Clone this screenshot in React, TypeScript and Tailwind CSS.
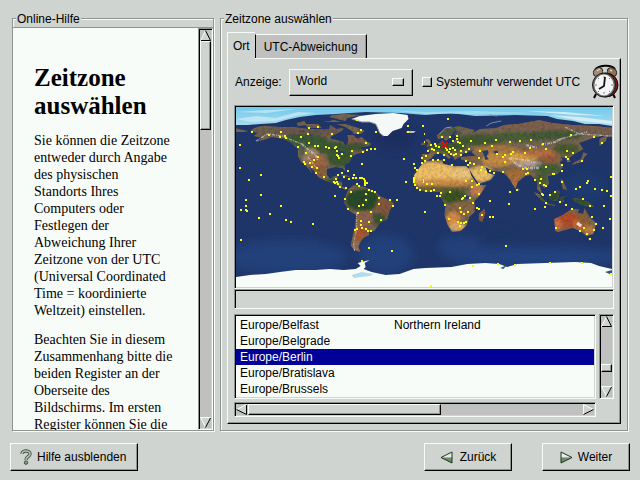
import React, { useState } from 'react';

const RAISED =
  'border border-t-[#f8fcf8] border-l-[#f8fcf8] border-r-black border-b-black bg-[#d0d4d0] shadow-[inset_-1px_-1px_0_#909490]';
const SUNKEN =
  'border border-t-[#909490] border-l-[#909490] border-r-[#f8fcf8] border-b-[#f8fcf8] p-px shadow-[inset_1px_1px_0_#000,inset_-1px_-1px_0_#d0d4d0]';
const GROOVE = 'border border-[#909490] shadow-[1px_1px_0_#f8fcf8,inset_1px_1px_0_#f8fcf8]';

const ZONES = [
  { name: 'Europe/Belfast', comment: 'Northern Ireland' },
  { name: 'Europe/Belgrade', comment: '' },
  { name: 'Europe/Berlin', comment: '' },
  { name: 'Europe/Bratislava', comment: '' },
  { name: 'Europe/Brussels', comment: '' },
];

// Land outlines: longitude, negated latitude
const LAND =
  'M-166-68L-162-70-156-71-141-70-128-70-115-68-108-68-95-68-94-72-88-68-82-69-82-67-87-64-94-60-93-58-88-57-82-55-80-51-78-53-77-57-78-62-73-62-69-58-65-60-62-57-56-53-58-51-66-50-65-48-61-46-66-44-70-43-74-40-76-35-81-32-80-26-83-29-89-30-97-28-97-22-94-18-90-21-87-21-88-16-83-15-83-10-78-9-80-7-85-10-92-14-100-17-105-20-109-26-114-31-110-23-117-32-121-35-124-41-124-48-130-54-137-58-148-60-156-57-163-55-157-59-165-61-161-64-168-66Z' +
  'M-77-8L-72-12-62-10-52-5-48-1-40 3-35 6-39 14-41 22-48 26-53 34-58 35-58 38-62 40-65 43-68 50-66 55-72 53-75 48-73 38-71 30-70 18-76 14-81 6-80 0Z' +
  'M-6-36L10-37 11-33 20-31 32-31 35-28 37-21 43-12 51-12 45-2 40 4 40 15 35 20 33 28 27 34 19 35 15 28 12 18 13 8 9 1 8-5-5-5-12-8-17-14-16-22-10-31Z' +
  'M-9-37L-9-43-2-43-1-46-4-48 2-51 8-54 10-57 12-54 20-54 24-59 30-60 24-60 21-63 25-65 22-66 17-61 18-60 13-56 11-59 6-58 5-62 14-68 25-71 40-67 38-64 45-68 60-69 68-72 80-73 100-77 112-74 130-72 150-71 170-69 180-68 180-65 175-62 163-60 162-56 156-51 156-58 163-62 150-59 137-54 141-48 133-43 128-39 129-35 126-35 125-39 120-40 122-37 119-35 122-30 117-23 108-21 109-13 105-9 100-13 103-2 98-8 98-16 92-22 87-21 80-15 78-8 73-17 70-21 66-25 57-26 50-30 52-24 59-22 55-17 44-13 39-21 35-28 35-36 28-37 27-40 41-41 37-45 39-47 33-45 28-43 28-41 23-38 22-37 19-41 13-45 18-40 16-38 12-42 8-44 3-43 0-39-5-36Z' +
  'M-5-50L1-51 0-53-2-57-4-58-6-57-3-54Z M-10-52L-6-52-6-55-9-54Z M-24-64L-14-65-16-66-23-66Z' +
  'M49 12L50 16 47 25 44 23 44 17Z M130-32L136-34 140-35 142-40 145-43 141-45 139-38 133-35Z' +
  'M95-5L100-3 106 5 103 4 98-1Z M106 6L115 8 114 9 106 7Z M109-1L117-7 119-5 117 4 111 3Z M119 1L125-1 122 1 123 5 120 5Z' +
  'M120-18L122-17 124-12 126-7 122-8 121-13Z M131 1L138 2 147 6 151 10 143 9 138 7 133 4Z M80-9L82-7 80-6Z' +
  'M114 22L122 18 130 12 137 12 136 16 141 17 142 11 146 19 153 26 150 37 144 39 138 34 131 31 124 33 118 35 115 34Z M145 41L148 41 147 44Z' +
  'M-85-22L-77-20-75-20-80-22Z M-74-20L-68-19-72-18Z M-182-69L-175-67-170-66-174-65-182-65Z' +
  'M-88-73L-80-73-68-69-62-66-66-63-72-63-74-66-80-70Z M-117-73L-105-73-102-69-115-69Z M-125-74L-118-76-116-72-124-71Z M-95-80L-80-76-78-79-65-82-80-83-92-82Z M-100-75L-84-75-90-77Z';

const CITIES: [number, number][] = [
  // North America
  [120, 12], [81, 19], [72, 20], [15, 24], [32, 27], [44, 24], [43, 29], [48, 28], [49, 30], [64, 29], [71, 26],
  [95, 26], [124, 22], [121, 25], [139, 24], [171, 18], [171, 24], [3, 37], [61, 39], [72, 35], [78, 38], [81, 38],
  [89, 39], [92, 40], [98, 40], [99, 39], [129, 35], [134, 41], [138, 41], [130, 42], [126, 44], [115, 43], [100, 43],
  [105, 46], [100, 47], [101, 48], [102, 50], [114, 48], [69, 45], [77, 52], [81, 49], [67, 54], [68, 56], [73, 55],
  [75, 59], [80, 60], [79, 65], [87, 69], [125, 56],
  // Caribbean and Central America
  [111, 63], [105, 65], [101, 67], [107, 69], [99, 71], [112, 71], [117, 67], [116, 70], [119, 70], [123, 70],
  [125, 70], [127, 71], [128, 73], [130, 75], [128, 77], [128, 75], [97, 74], [98, 75], [100, 74], [101, 76],
  [103, 79], [109, 80], [114, 84], [120, 76], [122, 78], [132, 82], [135, 83], [138, 84],
  // South America and the Atlantic
  [129, 86], [98, 88], [108, 91], [142, 90], [153, 92], [160, 92], [167, 51], [177, 56], [169, 74], [111, 101],
  [122, 98], [126, 97], [129, 92], [142, 96], [156, 98], [134, 104], [121, 105], [124, 113], [124, 117], [125, 120],
  [120, 121], [118, 122], [129, 121], [131, 123], [134, 123], [132, 114], [144, 112], [132, 140], [155, 143],
  [125, 153], [189, 104],
  // Pacific
  [3, 60], [12, 72], [24, 67], [24, 87], [9, 92], [9, 98], [4, 102], [9, 102], [10, 103], [22, 110], [33, 106],
  [44, 98], [49, 112], [54, 114], [76, 116], [4, 132],
  // Africa
  [178, 60], [180, 62], [177, 70], [177, 74], [177, 72], [178, 77], [180, 80], [183, 82], [190, 83], [185, 55],
  [189, 53], [187, 72], [187, 74], [191, 76], [196, 76], [195, 83], [198, 82], [205, 85], [204, 88], [201, 88],
  [214, 84], [226, 91], [229, 88], [234, 90], [237, 95], [209, 97], [227, 90], [243, 86], [241, 100], [243, 101],
  [246, 107], [254, 93], [254, 109], [257, 109], [224, 100], [225, 104], [228, 106], [232, 104], [213, 111],
  [222, 114], [225, 115], [228, 115], [230, 114], [224, 118], [230, 73], [236, 73], [236, 79], [241, 77], [243, 76],
  // Europe
  [186, 18], [212, 11], [188, 26], [188, 34], [195, 37], [199, 36], [200, 38], [206, 29], [214, 29], [221, 28],
  [221, 31], [217, 33], [222, 34], [224, 35], [227, 38], [235, 33], [203, 39], [196, 41], [198, 42], [192, 43],
  [202, 45], [210, 40], [211, 42], [214, 41], [213, 44], [215, 46], [217, 40], [219, 42], [220, 46], [218, 47],
  [225, 43], [225, 47], [230, 44], [233, 41], [190, 48], [185, 50], [197, 52], [202, 52], [208, 52], [208, 47],
  [216, 57],
  // Asia
  [230, 53], [232, 57], [234, 55], [238, 56], [243, 50], [244, 43], [249, 35], [256, 38], [260, 32], [274, 34],
  [284, 33], [295, 32], [307, 36], [294, 40], [289, 45], [277, 44], [269, 47], [267, 49], [269, 54], [275, 46],
  [261, 46], [335, 27], [358, 29], [366, 35], [310, 41], [331, 43], [337, 45], [330, 49], [332, 51], [346, 53],
  [326, 57], [326, 63], [317, 66], [318, 66], [310, 59], [305, 71], [299, 72], [287, 61], [291, 61], [292, 65],
  [290, 66], [267, 64], [258, 65], [254, 63], [250, 64], [246, 59], [245, 62], [281, 82], [274, 84], [304, 75],
  [308, 77], [310, 78], [306, 86], [314, 87], [319, 84], [326, 74],
  // Indian Ocean, Oceania
  [273, 96], [270, 138], [340, 81], [344, 79], [352, 73], [351, 75], [359, 81], [366, 82], [371, 83], [375, 69],
  [375, 88], [347, 91], [299, 101], [309, 99], [310, 95], [307, 87], [324, 94], [330, 97], [336, 101], [354, 98],
  [368, 98], [374, 111], [367, 120], [360, 116], [356, 109], [348, 120], [344, 123], [351, 126], [358, 122],
  [354, 131], [320, 120],
  // Antarctica
  [237, 158], [262, 156], [279, 157], [314, 155], [346, 155], [195, 178], [375, 166],
];

// cx, cy, rx, ry, colour
const TERRAIN: [number, number, number, number, string][] = [
  [-150, -66, 16, 5, '#6d604c'],
  [-115, -66, 30, 5, '#6a5650'],
  [-118, -57, 22, 6, '#3c5a38'],
  [-100, -50, 26, 6, '#3a5a34'],
  [-85, -40, 12, 10, '#3a5834'],
  [-70, -56, 10, 7, '#7c5a48'],
  [-70, -50, 12, 4, '#3d5434'],
  [-112, -41, 8, 8, '#a08468'],
  [-106, -35, 9, 7, '#a06a42'],
  [-103, -26, 6, 6, '#8a6040'],
  [-120, -48, 3, 8, '#546048'],
  [-90, -16, 9, 3, '#3c5a2e'],
  [-64, 3, 16, 11, '#2c4c2c'],
  [-44, 10, 8, 10, '#80583c'],
  [-50, 22, 8, 6, '#3e5430'],
  [-62, 22, 8, 8, '#8c6450'],
  [-66, 37, 6, 8, '#a85a30'],
  [-70, 49, 4, 5, '#96705a'],
  [2, -24, 24, 11, '#f0c068'],
  [28, -23, 10, 8, '#ecc47c'],
  [10, -14, 30, 4, '#cc9048'],
  [10, -8, 26, 3, '#646034'],
  [21, 0, 12, 7, '#3c5228'],
  [42, -7, 6, 7, '#c08050'],
  [28, 12, 12, 8, '#886844'],
  [20, 22, 7, 7, '#d88c48'],
  [24, 30, 8, 4, '#e0b070'],
  [46, -23, 11, 8, '#ecc068'],
  [0, -41, 9, 4, '#806a44'],
  [15, -50, 18, 5, '#3a5634'],
  [18, -64, 10, 5, '#4c5a44'],
  [45, -57, 22, 6, '#425834'],
  [80, -60, 28, 5, '#4a5e38'],
  [115, -62, 26, 5, '#445a38'],
  [110, -71, 50, 4, '#80604e'],
  [155, -66, 20, 5, '#786050'],
  [60, -47, 22, 5, '#a8783f'],
  [62, -37, 16, 7, '#c48c44'],
  [35, -39, 8, 2, '#94683c'],
  [85, -40, 14, 5, '#d8a448'],
  [100, -44, 18, 4, '#b8703f'],
  [110, -38, 9, 4, '#985c3c'],
  [90, -33, 13, 3, '#b4a098'],
  [78, -23, 9, 6, '#a87038'],
  [78, -14, 4, 6, '#b07040'],
  [108, -28, 13, 6, '#465e38'],
  [125, -48, 12, 6, '#4c5a34'],
  [102, -17, 7, 6, '#4c5c30'],
  [113, 0, 12, 8, '#345030'],
  [140, 5, 14, 5, '#36542c'],
  [48, 19, 4, 8, '#8c5440'],
  [126, 23, 14, 8, '#b4502c'],
  [117, 28, 4, 6, '#c87048'],
  [138, 27, 6, 6, '#c86838'],
  [142, 21, 6, 7, '#8c6038'],
  [147, 33, 6, 5, '#b87c44'],
];

function WorldMap() {
  return (
    <svg
      viewBox="0 0 377 180"
      preserveAspectRatio="none"
      role="img"
      aria-label="World"
      className="block h-full w-full"
    >
      <defs>
        <clipPath id="land">
          <path d={LAND} />
        </clipPath>
        <filter id="soft" x="-30%" y="-30%" width="160%" height="160%">
          <feGaussianBlur stdDeviation="1.6" />
        </filter>
        <filter id="haze" x="-30%" y="-30%" width="160%" height="160%">
          <feGaussianBlur stdDeviation="5" />
        </filter>
        <filter id="grain" x="0" y="0" width="100%" height="100%">
          <feTurbulence type="fractalNoise" baseFrequency="0.35" numOctaves="3" seed="4" />
          <feColorMatrix values="0 0 0 0 0  0 0 0 0 0  0 0 0 0 0  1.8 0 0 0 -0.7" />
        </filter>
        <linearGradient id="ice" x1="0" y1="0" x2="0" y2="1">
          <stop offset="0" stopColor="#70c8ec" />
          <stop offset="1" stopColor="#a8dcf0" />
        </linearGradient>
      </defs>

      <rect width="377" height="180" fill="#1f3568" />
      <g filter="url(#haze)">
        <ellipse cx="50" cy="150" rx="62" ry="17" fill="#203f7a" />
        <ellipse cx="150" cy="148" rx="28" ry="20" fill="#203f7a" />
        <ellipse cx="300" cy="150" rx="90" ry="10" fill="#20427f" />
        <ellipse cx="225" cy="140" rx="22" ry="12" fill="#22407a" />
        <ellipse cx="265" cy="128" rx="14" ry="7" fill="#1d3462" />
        <ellipse cx="160" cy="30" rx="22" ry="14" fill="#1c2f60" />
        <ellipse cx="350" cy="80" rx="20" ry="12" fill="#1f3a70" />
      </g>

      {/* arctic ice */}
      <path
        d="M0 0H377V19L364 17 350 17 338 14 322 12 312 9 280 8 240 9 215 6 190 8 165 6 130 5 100 7 80 8 64 10 50 13 40 16 24 17 12 18 0 18Z"
        fill="url(#ice)"
      />
      <path d="M0 12L20 9 40 11 62 5 80 6 60 9 40 14 15 15Z M0 5L30 3 60 2 30 6Z" fill="#d4eef4" opacity=".65" />
      <path d="M315 8L345 10 377 14 377 17 345 14Z M290 4L330 5 370 9 340 8Z" fill="#e8f4f4" opacity=".75" />
      <path d="M150 3L190 5 240 4 300 6 240 7 190 7Z" fill="#b8e4ee" opacity=".6" />

      <g transform="translate(196 90) scale(1.08 1)">
        <path d={LAND} fill="#786652" />
        <g clipPath="url(#land)">
          <g filter="url(#soft)">
            {TERRAIN.map(([cx, cy, rx, ry, fill], i) => (
              <ellipse key={i} cx={cx} cy={cy} rx={rx} ry={ry} fill={fill} />
            ))}
          </g>
          <rect x="-182" y="-90" width="349" height="180" filter="url(#grain)" opacity=".2" />
        </g>
        {/* inland seas and lakes */}
        <g fill="#223c68">
          <path d="M47-46L52-47 53-44 51-41 53-38 50-37 49-41Z" />
          <ellipse cx="60" cy="-45" rx="2" ry="1.5" />
          <path d="M-92-47L-87-49-84-46-80-45-82-43-86-45Z M-87-42L-86-46-85-42Z M104-52L109-55 107-52Z M32-1h3v3h-3Z" />
          <path d="M-124-66L-118-66-118-65Z M-114-62L-109-63-112-61Z M-98-53L-96-50-98-50Z" />
        </g>
      </g>

      {/* Greenland and Iceland */}
      <path d="M116 12L124 9 140 7 158 6 172 8 173 12 168 17 166 21 157 24 152 29 148 29 144 26 142 21 140 17 134 15 126 15Z" fill="#f4f8f6" />
      <path d="M116 12L126 15 134 15 140 17 142 21 144 26 148 29" fill="none" stroke="#8c9098" strokeWidth="1" />
      <path d="M173 24L180 24 178 26 174 26Z" fill="#b8c4cc" />

      {/* snow on the mountain ranges */}
      <g fill="none" stroke="#dcd8dc" strokeDasharray="3 1 1 1" opacity=".6">
        <path d="M20 34L32 27 46 29 58 34 66 37" strokeWidth="1.4" />
        <path d="M66 37L73 43 80 48 82 54" strokeWidth="2" />
        <path d="M72 50L77 56 80 60" strokeWidth="1.2" />
        <path d="M274 51L282 58 291 61 304 61" strokeWidth="2.4" />
        <path d="M274 51L290 53 302 56" strokeWidth="1.4" />
        <path d="M291 38L302 41 M306 38L320 35 328 31" strokeWidth="2" />
        <path d="M322 33L340 28 352 25 M330 20L344 27 377 29" strokeWidth="1.3" />
        <path d="M121 106L121 122 118 136 119 144" strokeWidth="1" />
      </g>
      <path d="M204 27L210 21 216 20" fill="none" stroke="#a09c98" strokeWidth="1" />
      <path d="M251 19L256 16 266 14 M254 8L262 9" fill="none" stroke="#7c88a4" strokeWidth="1" />
      <path d="M342 116L346 119" fill="none" stroke="#ecdcc8" strokeWidth="3" />

      {/* Antarctica */}
      <path
        d="M0 170L14 168 30 167 44 165 60 163 80 163 94 162 108 163 120 162 125 159 122 156 134 153 129 156 130 160 128 162 136 165 150 168 164 167 178 162 190 161 216 160 232 157 250 156 264 157 272 160 282 157 310 156 340 155 356 156 364 159 377 162V180H0Z"
        fill="#f8fcf8"
      />
      <path d="M116 168L126 165 138 167 134 169 118 171Z" fill="#b0dcec" />
      <path d="M265 161L272 158 268 162Z M370 165L377 163V168Z" fill="#2c5484" />

      <g fill="#ffff00" shapeRendering="crispEdges">
        {CITIES.map(([x, y], i) => (
          <rect key={i} x={x} y={y} width="2" height="2" />
        ))}
      </g>
      <path d="M206 35L212 41M212 35L206 41" stroke="#f80000" strokeWidth="1.6" />
    </svg>
  );
}

function ClockIcon() {
  return (
    <svg width="28" height="36" viewBox="0 0 28 36" className="block" aria-hidden="true">
      <path d="M4 6C7 1 20 0 24 5" fill="none" stroke="#000" strokeWidth="2" />
      <path d="M5 30L3 34M22 30L24 34" stroke="#000" strokeWidth="2" />
      <ellipse cx="7" cy="8" rx="5" ry="4" transform="rotate(-35 7 8)" fill="#a08c74" stroke="#302418" />
      <ellipse cx="21" cy="8" rx="5" ry="4" transform="rotate(35 21 8)" fill="#8c745c" stroke="#302418" />
      <path d="M6 7L9 5M19 6L21 7" stroke="#d8ccb8" strokeWidth="1.5" />
      <ellipse cx="15" cy="21" rx="12" ry="12" fill="#6c1c14" stroke="#180808" />
      <ellipse cx="13" cy="21" rx="11.5" ry="12" fill="#706c6c" stroke="#181818" />
      <ellipse cx="13" cy="21" rx="9.6" ry="10.4" fill="#f4f4f4" />
      <path
        d="M13 12v2M13 28v2M4 21h2M20 21h2M7 14l1 1M19 14l-1 1M7 28l1-1M19 28l-1-1"
        stroke="#808080"
        strokeWidth="1"
      />
      <path d="M14 13L13 22L8 25" fill="none" stroke="#101018" strokeWidth="1.8" />
    </svg>
  );
}

type Direction = 'up' | 'down' | 'left' | 'right';

// light and dark edges of each arrow
const ARROWS: Record<Direction, { face: string; light: string; dark: string }> = {
  up: { face: 'M5.5 0L11 11H0Z', light: 'M0.5 11L5.5 0.5', dark: 'M5.5 0.5L10.5 10.5H1' },
  down: { face: 'M0 0H11L5.5 11Z', light: 'M10.5 0.5H0.5L5.5 10.5', dark: 'M10.5 1L5.5 10.5' },
  left: { face: 'M0 5.5L11 0V11Z', light: 'M0.5 5.5L10.5 0.5', dark: 'M0.5 5.5L10.5 10.5V1' },
  right: { face: 'M0 0L11 5.5L0 11Z', light: 'M0.5 10.5V0.5L10.5 5.5', dark: 'M10.5 5.5L0.5 10.5' },
};

function ArrowButton({ direction, label }: { direction: Direction; label: string }) {
  const { face, light, dark } = ARROWS[direction];
  return (
    <button type="button" aria-label={label} className="block shrink-0">
      <svg width="11" height="11" viewBox="0 0 11 11" className="block">
        <path d={face} fill="#d0d4d0" />
        <path d={light} fill="none" stroke="#f8fcf8" />
        <path d={dark} fill="none" stroke="#000" />
      </svg>
    </button>
  );
}

function HelpPanel() {
  return (
    <section className={`flex w-[202px] shrink-0 flex-col ${GROOVE}`}>
      <h2 className="relative -mt-2 ml-[3px] self-start bg-[#d0d4d0] px-px leading-4">Online-Hilfe</h2>
      <div className="flex min-h-0 flex-1 border-t border-[#909490]">
        <article className="min-w-0 flex-1 space-y-3 overflow-hidden bg-[#f8fcf8] pt-9 pr-[25px] pl-[21px] font-['Liberation_Serif',serif] text-[14px] leading-[17px]">
          <h1 className="text-[25px] leading-7 font-bold">Zeitzone auswählen</h1>
          <p>
            Sie können die Zeitzone entweder durch Angabe des physischen Standorts Ihres Computers oder Festlegen der
            Abweichung Ihrer Zeitzone von der UTC (Universal Coordinated Time = koordinierte Weltzeit) einstellen.
          </p>
          <p>
            Beachten Sie in diesem Zusammenhang bitte die beiden Register an der Oberseite des Bildschirms. Im ersten
            Register können Sie die
          </p>
        </article>
        <div className={`flex w-[15px] flex-col items-center bg-[#c0c0c0] ${SUNKEN}`}>
          <ArrowButton direction="up" label="Nach oben" />
          <div className={`h-[89px] w-full ${RAISED}`} />
          <div className="flex-1" />
          <ArrowButton direction="down" label="Nach unten" />
        </div>
      </div>
    </section>
  );
}

function ZoneList() {
  const [selected, setSelected] = useState('Europe/Berlin');

  return (
    <div className="mt-[5px] grid grid-cols-[1fr_15px] gap-[3px]">
      <div className={`h-[85px] overflow-hidden bg-[#f8fcf8] ${SUNKEN}`}>
        <table className="mt-px w-full table-fixed border-collapse text-left">
          <tbody>
            {ZONES.map((zone) => (
              <tr
                key={zone.name}
                onClick={() => setSelected(zone.name)}
                className={zone.name === selected ? 'h-4 bg-[#000098] text-[#f8fcf8]' : 'h-4'}
              >
                <td className="w-[154px] p-0 pl-1 leading-4">{zone.name}</td>
                <td className="p-0 pl-1 leading-4">{zone.comment}</td>
              </tr>
            ))}
          </tbody>
        </table>
      </div>
      <div className={`flex flex-col items-center bg-[#c0c0c0] ${SUNKEN}`}>
        <ArrowButton direction="up" label="Nach oben" />
        <div className="flex-1" />
        <div className={`h-2 w-full ${RAISED}`} />
        <div className="h-3.5" />
        <ArrowButton direction="down" label="Nach unten" />
      </div>
      <div className={`flex h-[15px] items-center bg-[#c0c0c0] ${SUNKEN}`}>
        <ArrowButton direction="left" label="Nach links" />
        <div className={`ml-px h-full w-[54%] ${RAISED}`} />
        <div className="flex-1" />
        <ArrowButton direction="right" label="Nach rechts" />
      </div>
    </div>
  );
}

function TimezonePanel() {
  const [view, setView] = useState('World');
  const [utc, setUtc] = useState(false);

  return (
    <section className={`flex min-w-0 flex-1 flex-col px-1.5 pb-1.5 ${GROOVE}`}>
      <h2 className="relative -mt-2 -ml-[3px] self-start bg-[#d0d4d0] px-px leading-4">Zeitzone auswählen</h2>

      <div role="tablist" className="relative mt-[5px] -mb-px flex items-end">
        <button
          type="button"
          role="tab"
          aria-selected="true"
          className="h-[27px] border-t border-l border-[#f8fcf8] bg-[#d0d4d0] px-[5px]"
        >
          Ort
        </button>
        <button
          type="button"
          role="tab"
          aria-selected="false"
          className="mb-px h-6 border-t border-r border-l border-t-[#f8fcf8] border-r-black border-l-black bg-[#c0c0c0] px-2 shadow-[inset_-1px_0_0_#909490]"
        >
          UTC-Abweichung
        </button>
      </div>

      <div className={`flex min-h-0 flex-1 flex-col px-1.5 pt-[5px] pb-1.5 ${RAISED}`}>
        <div className="-mr-[5px] mb-[5px] flex items-center">
          <label htmlFor="view" className="w-[55px] pl-px">
            Anzeige:
          </label>
          <div className="relative">
            <select
              id="view"
              value={view}
              onChange={(e) => setView(e.target.value)}
              className={`block h-[27px] w-[124px] appearance-none pb-0.5 pl-1.5 outline-none ${RAISED}`}
            >
              <option value="World">World</option>
            </select>
            <span className={`pointer-events-none absolute top-[9px] right-[9px] h-2 w-3 ${RAISED}`} />
          </div>
          <label className="ml-[9px] flex items-center gap-1 whitespace-nowrap">
            <input
              type="checkbox"
              checked={utc}
              onChange={(e) => setUtc(e.target.checked)}
              className={`h-[10px] w-[10px] appearance-none ${RAISED}`}
            />
            Systemuhr verwendet UTC
          </label>
          <div className="ml-auto">
            <ClockIcon />
          </div>
        </div>

        <div className={`min-h-0 flex-1 ${SUNKEN}`}>
          <WorldMap />
        </div>
        <div className={`h-5 ${SUNKEN}`} />
        <ZoneList />
      </div>
    </section>
  );
}

export default function App() {
  return (
    <div className="flex h-screen flex-col bg-[#d0d4d0] pt-[18px] pb-[9px] font-['Liberation_Sans',sans-serif] text-[12px] text-black">
      <main className="flex min-h-0 flex-1 gap-1.5 px-3">
        <HelpPanel />
        <TimezonePanel />
      </main>

      <footer className="mt-3 flex px-[10px]">
        <button type="button" className={`flex h-7 w-32 items-center gap-1 pl-2 ${RAISED}`}>
          <svg width="14" height="16" viewBox="0 0 14 16" aria-hidden="true">
            <path d="M3 5C3 1 11 1 11 5C11 8 7 7 7 11" fill="none" stroke="#485848" strokeWidth="3.4" />
            <path d="M3 5C3 1 11 1 11 5C11 8 7 7 7 11" fill="none" stroke="#b0c0b0" strokeWidth="1.6" />
            <circle cx="7" cy="13.6" r="1.7" fill="#90a090" stroke="#384838" />
          </svg>
          Hilfe ausblenden
        </button>
        <div className="ml-auto flex gap-[30px]">
          <button type="button" className={`flex h-7 w-[88px] items-center justify-center gap-[7px] ${RAISED}`}>
            <svg width="13" height="13" viewBox="0 0 13 13" aria-hidden="true">
              <path d="M1 6.5L12 1V6.5Z" fill="#e8ece8" />
              <path d="M1 6.5H12V12Z" fill="#6c9064" />
              <path d="M1 6.5L12 1V12Z" fill="none" stroke="#203020" />
            </svg>
            Zurück
          </button>
          <button type="button" className={`flex h-7 w-[88px] items-center justify-center gap-[5px] ${RAISED}`}>
            <svg width="13" height="13" viewBox="0 0 13 13" aria-hidden="true">
              <path d="M1 1L12 6.5H1Z" fill="#e8ece8" />
              <path d="M1 6.5H12L1 12Z" fill="#6c9064" />
              <path d="M1 1L12 6.5L1 12Z" fill="none" stroke="#203020" />
            </svg>
            Weiter
          </button>
        </div>
      </footer>
    </div>
  );
}
